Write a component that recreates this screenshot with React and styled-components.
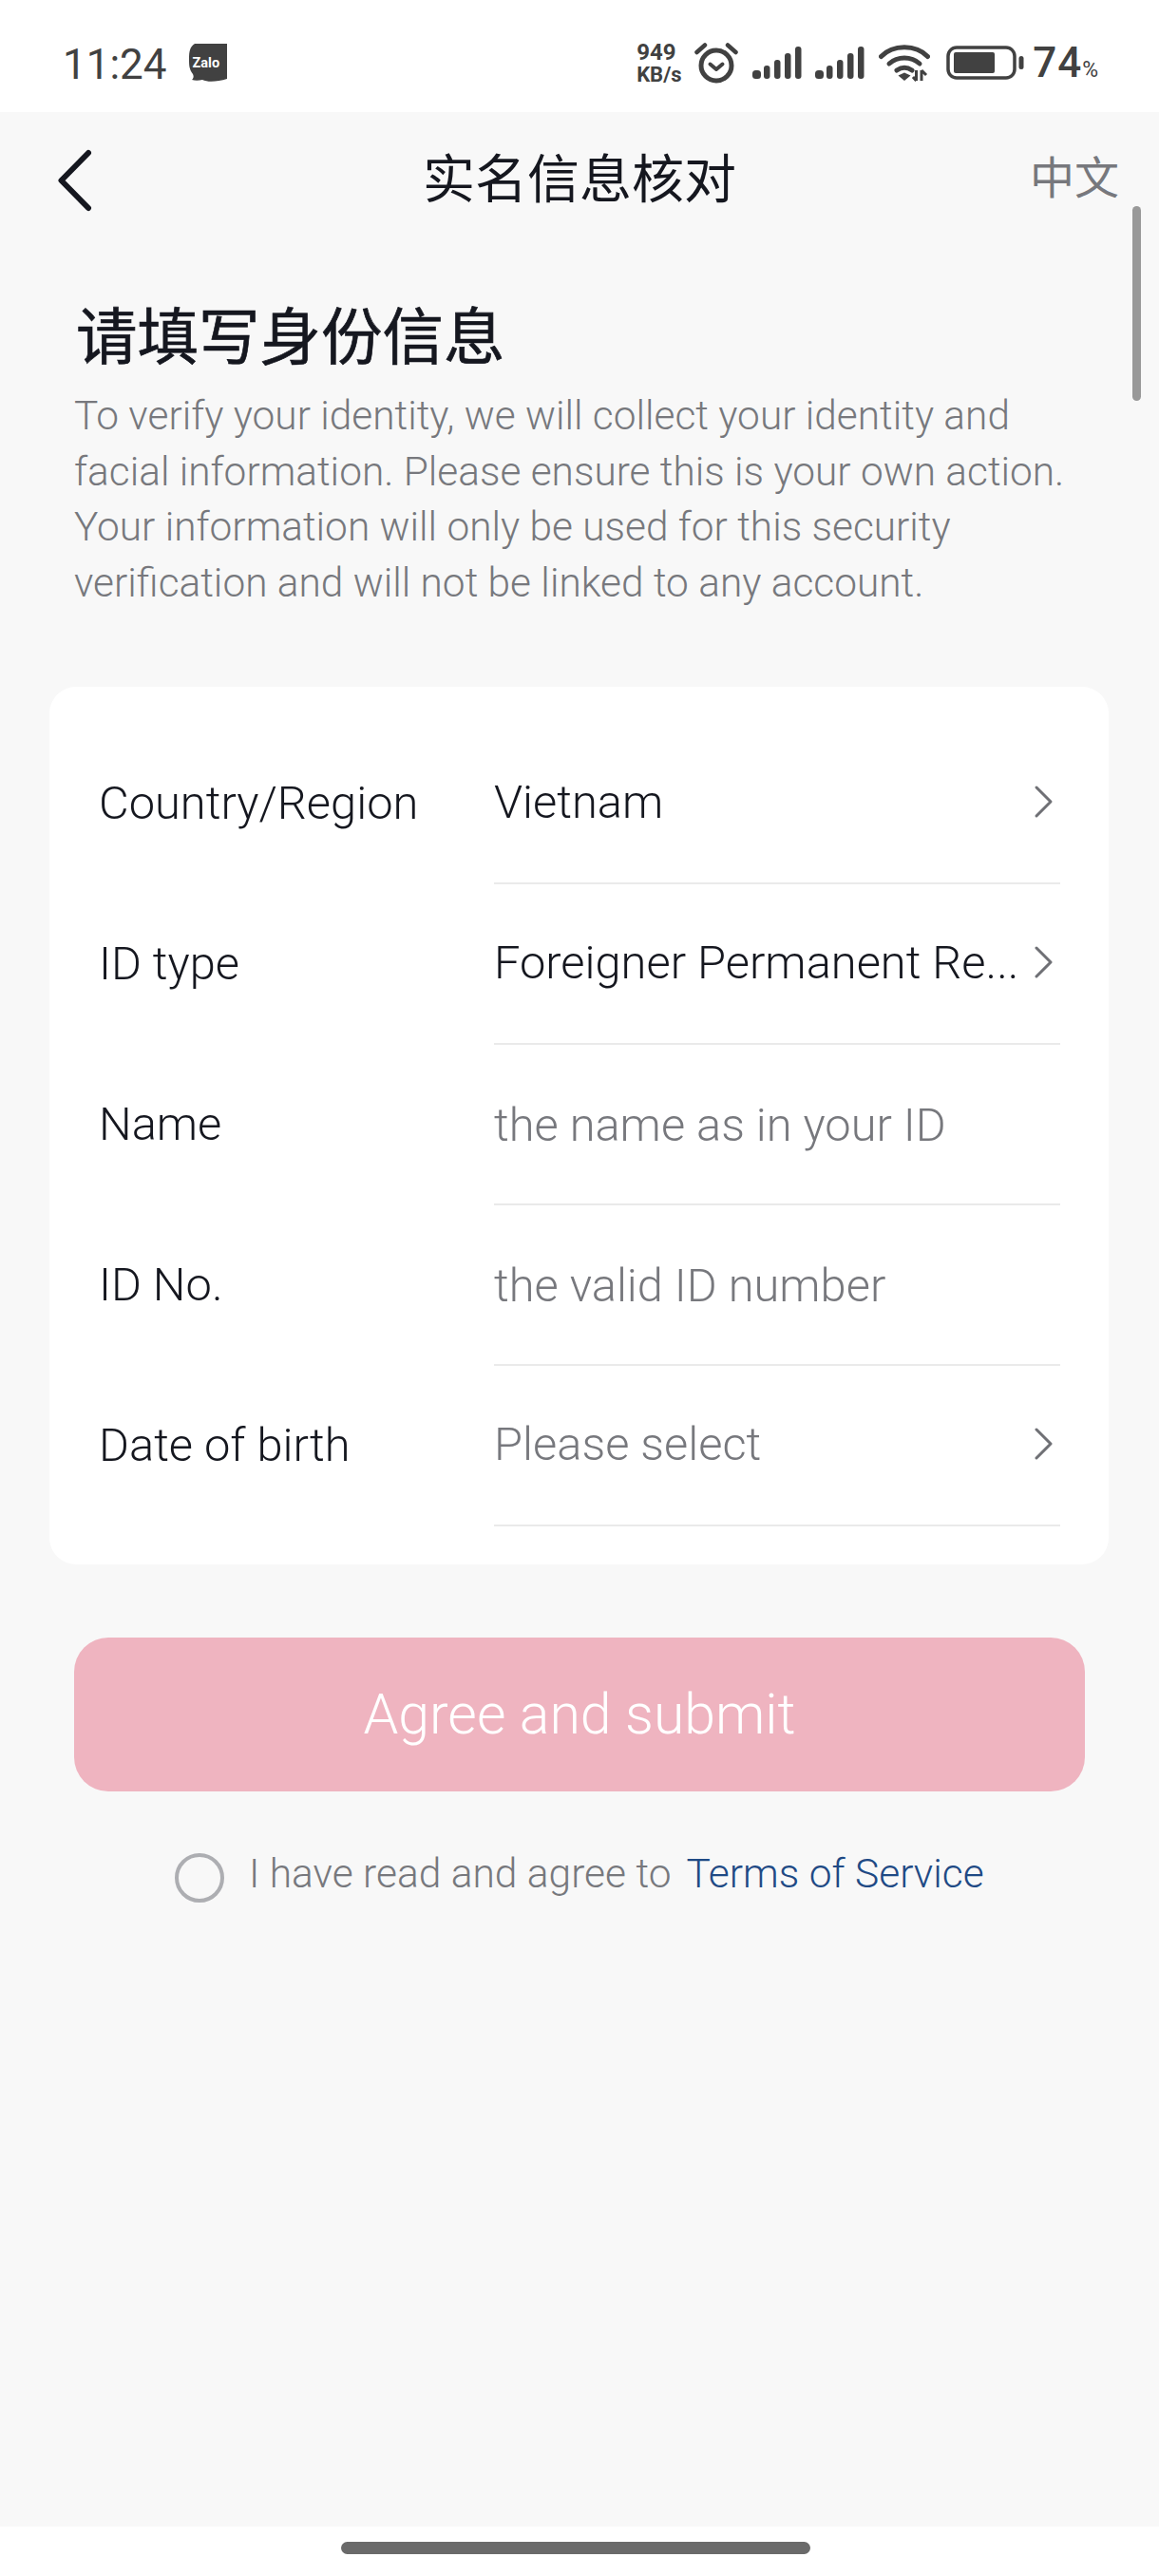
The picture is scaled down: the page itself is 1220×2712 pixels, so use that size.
import React from "react";
import styled, { createGlobalStyle } from "styled-components";

const Global = createGlobalStyle`
  html, body { margin: 0; padding: 0; background: #f8f8f8; }
  * { box-sizing: border-box; }
`;

const Screen = styled.div`
  position: relative;
  width: 1220px;
  height: 2712px;
  display: flex;
  flex-direction: column;
  overflow: hidden;
  background: #f8f8f8;
  font-family: Roboto, "Noto Sans CJK SC", sans-serif;
  color: #15171f;
`;

const StatusBar = styled.div`
  height: 118px;
  flex: none;
  background: #fff;
  display: flex;
  align-items: center;
  justify-content: space-between;
  padding: 14px 64px 0 66px;
  color: #414141;
`;
const StatusLeft = styled.div`
  display: flex;
  align-items: center;
  gap: 23px;
`;
const Clock = styled.span`
  font-size: 44px;
  line-height: 50px;
  font-weight: 400;
  padding-top: 4px;
`;
const StatusRight = styled.div`
  display: flex;
  align-items: center;
`;
const Speed = styled.div`
  display: flex;
  flex-direction: column;
  width: 61px;
  font-weight: 700;
`;
const SpeedValue = styled.span`
  font-size: 24px;
  line-height: 24px;
`;
const SpeedUnit = styled.span`
  font-size: 22px;
  line-height: 23px;
`;
const IconSlot = styled.span`
  display: flex;
  margin-left: ${(p) => p.$gap}px;
`;
const Percent = styled.span`
  font-size: 44px;
  line-height: 50px;
  letter-spacing: 1px;
  font-weight: 500;
  margin-left: 9px;
  padding-top: 7px;
  small { font-size: 23px; font-weight: 400; letter-spacing: 0; }
`;

const Main = styled.main`
  position: relative;
  flex: 1;
  display: flex;
  flex-direction: column;
`;
const NavBar = styled.header`
  height: 132px;
  flex: none;
  display: flex;
  align-items: center;
  justify-content: space-between;
  padding: 0 42px 0 60px;
  position: relative;
`;
const BackButton = styled.span`
  display: flex;
  margin-top: 12px;
`;
const NavTitle = styled.h1`
  position: absolute;
  left: 0;
  right: 0;
  margin: 0;
  text-align: center;
  font-size: 55px;
  line-height: 76px;
  font-weight: 400;
  font-family: "Noto Sans CJK SC", sans-serif;
  color: #15171f;
`;
const LangToggle = styled.span`
  font-size: 47px;
  line-height: 60px;
  font-family: "Noto Sans CJK SC", sans-serif;
  color: #77787d;
`;

const Intro = styled.section`
  padding: 55px 78px 0;
`;
const Heading = styled.h2`
  margin: 0 0 0 2px;
  font-family: "Noto Sans CJK SC", sans-serif;
  font-size: 64.5px;
  line-height: 90px;
  font-weight: 400;
  -webkit-text-stroke: 0.7px #15171f;
  color: #15171f;
`;
const Description = styled.p`
  margin: 14px 0 0;
  width: 1064px;
  font-size: 42.4px;
  line-height: 58.7px;
  font-weight: 300;
  color: #77787d;
`;

const Card = styled.section`
  margin: 79px 53px 0 52px;
  height: 924px;
  background: #fff;
  border-radius: 28px;
  padding: 39px 51px 0 52px;
`;
const Row = styled.div`
  height: 169px;
  display: flex;
`;
const Label = styled.div`
  width: 416px;
  flex: none;
  display: flex;
  align-items: center;
  padding-bottom: 2px;
  font-size: 48.8px;
  font-weight: 300;
  color: #15171f;
`;
const Field = styled.div`
  flex: 1;
  min-width: 0;
  display: flex;
  align-items: center;
  justify-content: space-between;
  border-bottom: 2px solid #eaeaea;
  font-size: 48.8px;
  font-weight: 300;
  color: ${(p) => (p.$placeholder ? "#77787d" : "#15171f")};
  padding: ${(p) => (p.$input ? "3px 0 0" : "0 0 2px")};
`;
const FieldText = styled.span`
  flex: 1;
  min-width: 0;
  white-space: nowrap;
`;

const SubmitButton = styled.button`
  display: block;
  margin: 77px 78px 0;
  width: 1064px;
  height: 162px;
  border: 0;
  border-radius: 36px;
  background: #efb4c0;
  color: #fff;
  font-family: Roboto, sans-serif;
  font-size: 59px;
  font-weight: 300;
`;
const Agreement = styled.div`
  margin-top: 61px;
  padding-left: 184px;
  display: flex;
  align-items: center;
  font-size: 42.5px;
  line-height: 52px;
  font-weight: 300;
  color: #77787d;
`;
const AgreementText = styled.span`
  margin-bottom: 8px;
`;
const Radio = styled.span`
  width: 52px;
  height: 52px;
  flex: none;
  border: 4px solid #adaeb2;
  border-radius: 50%;
  margin-right: 26px;
`;
const TermsLink = styled.a`
  margin-left: 16px;
  margin-bottom: 8px;
  color: #1f4a85;
  font-weight: 300;
`;

const ScrollThumb = styled.div`
  position: absolute;
  right: 19px;
  top: 99px;
  width: 9px;
  height: 205px;
  border-radius: 4.5px;
  background: #999;
`;

const GestureArea = styled.div`
  height: 52px;
  flex: none;
  background: #fff;
  display: flex;
  justify-content: center;
  padding: 16px 9px 0 0;
`;
const GesturePill = styled.div`
  width: 494px;
  height: 13px;
  border-radius: 7px;
  background: #6a6a6a;
`;

const ChevronSlot = styled.svg`
  flex: none;
  margin: 0 6px 0 0;
`;

const Chevron = () => (
  <ChevronSlot width="24" height="36" viewBox="0 0 24 36" fill="none">
    <path d="M5 3 L20 18 L5 33" stroke="#6f7075" strokeWidth="3" strokeLinecap="round" strokeLinejoin="round" />
  </ChevronSlot>
);

const BackIcon = () => (
  <svg width="40" height="66" viewBox="0 0 40 66" fill="none">
    <path d="M33 4 L4.5 33 L33 62" stroke="#15171f" strokeWidth="6" strokeLinecap="round" strokeLinejoin="round" />
  </svg>
);

const ZaloIcon = () => (
  <svg width="40" height="40" viewBox="0 0 40 40">
    <path d="M6 0 H40 V37 C30 40 20 41 14 38 C10 39 6 39 3 38 C5 36 5 34 4 32 C0 27 0 22 0 16 C0 8 1 3 6 0 Z" fill="#414141" />
    <text x="3.5" y="25" fontFamily="Roboto, sans-serif" fontSize="14.5" fontWeight="700" fill="#fff">Zalo</text>
  </svg>
);

const AlarmIcon = () => (
  <svg width="46" height="44" viewBox="0 0 46 44" fill="none" stroke="#414141" strokeLinecap="round" strokeLinejoin="round">
    <circle cx="23" cy="25" r="16" strokeWidth="5" />
    <path d="M16.5 23.5 L23 29 L29.5 23.5" strokeWidth="4" />
    <path d="M2.5 11 L11 3.5 M43.5 11 L35 3.5" strokeWidth="4.5" />
  </svg>
);

const SignalIcon = () => (
  <svg width="52" height="34" viewBox="0 0 52 34" fill="#414141">
    <rect x="0" y="25" width="9" height="9" rx="3.5" />
    <rect x="12" y="20" width="6.5" height="14" rx="3" />
    <rect x="23" y="14" width="6.5" height="20" rx="3" />
    <rect x="34" y="7" width="6.5" height="27" rx="3" />
    <rect x="45" y="0" width="6.5" height="34" rx="3" />
  </svg>
);

const WifiIcon = () => (
  <svg width="54" height="40" viewBox="0 0 54 40" fill="none">
    <g stroke="#414141" strokeWidth="5" strokeLinecap="round">
      <path d="M2.5 13.5 C 15 0.5, 39 0.5, 51.5 13.5" />
      <path d="M11 21 C 20 13, 34 13, 43 21" />
      <path d="M19 28 C 24 24.5, 30 24.5, 35 28" />
    </g>
    <path d="M20.5 33.5 L27 30.5 L33.5 33.5 L27 39 Z" fill="#414141" />
    <path d="M39.5 28 V39 M36 35 L39.5 39 M45 39 V28 M45 28 L50 33" stroke="#414141" strokeWidth="3" fill="none" />
  </svg>
);

const BatteryIcon = () => (
  <svg width="82" height="36" viewBox="0 0 82 36" fill="none">
    <rect x="2" y="2" width="70" height="32" rx="9" stroke="#414141" strokeWidth="3.5" />
    <rect x="8" y="7" width="43" height="22" rx="2" fill="#414141" />
    <rect x="76.5" y="11" width="5" height="14" rx="2.5" fill="#414141" />
  </svg>
);

const rows = [
  { label: "Country/Region", value: "Vietnam", chevron: true },
  { label: "ID type", value: "Foreigner Permanent Re...", chevron: true },
  { label: "Name", value: "the name as in your ID", placeholder: true, input: true },
  { label: "ID No.", value: "the valid ID number", placeholder: true, input: true },
  { label: "Date of birth", value: "Please select", placeholder: true, chevron: true },
];

export default function App() {
  return (
    <Screen>
      <Global />
      <StatusBar>
        <StatusLeft>
          <Clock>11:24</Clock>
          <ZaloIcon />
        </StatusLeft>
        <StatusRight>
          <Speed>
            <SpeedValue>949</SpeedValue>
            <SpeedUnit>KB/s</SpeedUnit>
          </Speed>
          <IconSlot $gap={0}><AlarmIcon /></IconSlot>
          <IconSlot $gap={15}><SignalIcon /></IconSlot>
          <IconSlot $gap={14}><SignalIcon /></IconSlot>
          <IconSlot $gap={15}><WifiIcon /></IconSlot>
          <IconSlot $gap={17}><BatteryIcon /></IconSlot>
          <Percent>
            74<small>%</small>
          </Percent>
        </StatusRight>
      </StatusBar>
      <Main>
        <ScrollThumb />
        <NavBar>
          <BackButton><BackIcon /></BackButton>
          <NavTitle>实名信息核对</NavTitle>
          <LangToggle>中文</LangToggle>
        </NavBar>
        <Intro>
          <Heading>请填写身份信息</Heading>
          <Description>
            To verify your identity, we will collect your identity and facial information. Please ensure this is your own
            action. Your information will only be used for this security verification and will not be linked to any account.
          </Description>
        </Intro>
        <Card>
          {rows.map((r) => (
            <Row key={r.label}>
              <Label>{r.label}</Label>
              <Field $placeholder={r.placeholder} $input={r.input}>
                <FieldText>{r.value}</FieldText>
                {r.chevron && <Chevron />}
              </Field>
            </Row>
          ))}
        </Card>
        <SubmitButton>Agree and submit</SubmitButton>
        <Agreement>
          <Radio />
          <AgreementText>I have read and agree to</AgreementText>
          <TermsLink>Terms of Service</TermsLink>
        </Agreement>
      </Main>
      <GestureArea>
        <GesturePill />
      </GestureArea>
    </Screen>
  );
}
